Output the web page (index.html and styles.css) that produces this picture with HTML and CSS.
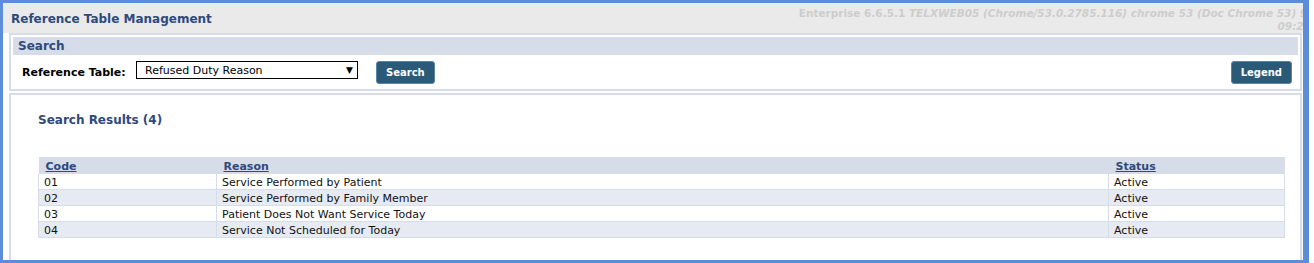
FILE: index.html
```html
<!DOCTYPE html>
<html lang="en">
<head>
  <meta charset="UTF-8" />
  <title>Reference Table Management</title>
  <link rel="stylesheet" href="styles.css">
</head>
<body>

<div class="frame">
  <div class="page-header">
    <h1>Reference Table Management</h1>
    <div class="build-info">
      <div>Enterprise 6.6.5.1 <i>TELXWEB05 (Chrome/53.0.2785.116) chrome 53 (Doc Chrome 53) 9/</i></div>
      <div><i>09:23 </i></div>
    </div>
  </div>

  <div class="panel search-panel">
    <div class="panel-title">Search</div>
    <div class="search-row">
      <label for="refTable">Reference Table:</label>
      <div class="select-box" id="refTable">
        <span>Refused Duty Reason</span>
        <span class="arrow">&#9660;</span>
      </div>
      <button class="btn">Search</button>
      <button class="btn legend">Legend</button>
    </div>
  </div>

  <div class="panel results-panel">
    <h2>Search Results (4)</h2>
    <table class="results">
      <thead>
        <tr>
          <th class="col-code"><a href="#">Code</a></th>
          <th class="col-reason"><a href="#">Reason</a></th>
          <th class="col-status"><a href="#">Status</a></th>
        </tr>
      </thead>
      <tbody>
        <tr><td>01</td><td>Service Performed by Patient</td><td>Active</td></tr>
        <tr><td>02</td><td>Service Performed by Family Member</td><td>Active</td></tr>
        <tr><td>03</td><td>Patient Does Not Want Service Today</td><td>Active</td></tr>
        <tr><td>04</td><td>Service Not Scheduled for Today</td><td>Active</td></tr>
      </tbody>
    </table>
  </div>
</div>

</body>
</html>
```

FILE: styles.css
```css
body {
  margin: 0;
  background: #fff;
  font-family: "DejaVu Sans", Verdana, sans-serif;
  font-size: 11px;
  color: #000;
  overflow: hidden;
}

.frame {
  width: 1300px;
  height: 257px;
  border: 3px solid #5b8dd8;
  border-right-width: 6px;
  overflow: hidden;
  background: #fff;
}

.page-header {
  height: 30px;
  background: #eaeaea;
  display: flex;
  justify-content: space-between;
  position: relative;
}

.page-header h1 {
  margin: 0;
  padding: 9px 0 0 8px;
  font-size: 12px;
  color: #2e4a7c;
}

.build-info {
  position: absolute;
  right: -8px;
  top: 4px;
  color: #cdcdcd;
  font-size: 10.5px;
  font-weight: bold;
  text-align: right;
  line-height: 13px;
  white-space: nowrap;
}

.panel {
  margin: 0 0 0 6px;
  width: 1285px;
  border: 2px solid #d6dce9;
  padding: 2px;
}

.panel-title {
  height: 18px;
  line-height: 19px;
  background: #d6dce8;
  color: #2e4a7c;
  font-weight: bold;
  font-size: 12px;
  padding-left: 5px;
}

.search-row {
  display: flex;
  align-items: center;
  height: 30px;
  padding: 2px 6px 0 9px;
}

.search-row label {
  font-weight: bold;
  width: 114px;
}

.select-box {
  width: 208px;
  height: 16px;
  border: 1px solid #000;
  display: flex;
  justify-content: space-between;
  align-items: center;
  padding: 0 4px 0 8px;
  margin-top: -4px;
}

.select-box .arrow {
  font-size: 9px;
}

.btn {
  background: #2b5a78;
  color: #fff;
  border: 1px solid #5b86a3;
  border-radius: 3px;
  font-family: "DejaVu Sans", Verdana, sans-serif;
  font-weight: bold;
  font-size: 10px;
  height: 23px;
  padding: 0 9px;
  margin-left: 18px;
}

.btn.legend {
  margin-left: auto;
}

.results-panel {
  margin-top: 2px;
  height: 180px;
  padding: 0 2px;
}

.results-panel h2 {
  margin: 0;
  padding: 18px 0 0 25px;
  font-size: 12px;
  color: #2e4a7c;
  height: 44px;
}

.results {
  margin-left: 25px;
  width: 1247px;
  border-collapse: collapse;
}

.results th {
  background: #d6dce8;
  text-align: left;
  padding: 2px 0 0 7px;
  height: 15px;
}

.results th a {
  color: #2e4a7c;
  font-weight: bold;
}

.col-code { width: 171px; }
.col-status { width: 169px; }

.results td {
  height: 14px;
  padding: 1px 0 0 5px;
  border: 1px solid #d6dce8;
  border-top: none;
  color: #111;
}

.results tbody tr:nth-child(even) td {
  background: #e6eaf3;
}
```
